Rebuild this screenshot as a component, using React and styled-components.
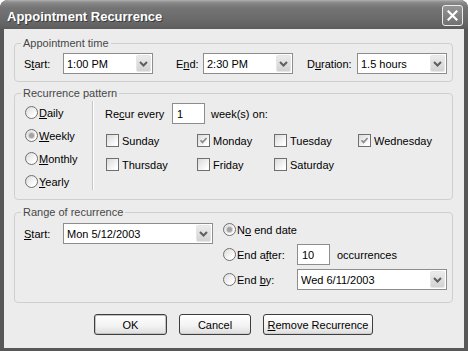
import React from "react";
import styled, { createGlobalStyle } from "styled-components";

const GlobalStyle = createGlobalStyle`
  html, body {
    margin: 0;
    padding: 0;
    background: #fff;
  }
  body {
    font-family: "Liberation Sans", Arial, sans-serif;
    font-size: 11px;
    color: #000;
  }
`;

const Window = styled.div`
  width: 468px;
  height: 351px;
  box-sizing: border-box;
  display: flex;
  flex-direction: column;
  background: #575757;
  border-radius: 8px 8px 0 0;
  overflow: hidden;
`;

const TitleBar = styled.div`
  height: 29px;
  flex-shrink: 0;
  display: flex;
  align-items: center;
  justify-content: space-between;
  padding: 1px 5px 0 7px;
  box-sizing: border-box;
  background: linear-gradient(
    to bottom,
    #b8b8b8 0px,
    #9c9c9c 1px,
    #878787 3px,
    #747474 8px,
    #6b6b6b 18px,
    #626262 26px,
    #5b5b5b 29px
  );
`;

const Title = styled.div`
  color: #fff;
  font-size: 13px;
  font-weight: bold;
  text-shadow: 1px 1px 0 #3a3a3a;
  margin-top: 2px;
`;

const CloseButton = styled.div`
  width: 21px;
  height: 21px;
  box-sizing: border-box;
  border: 1px solid #ececec;
  border-radius: 3px;
  background: linear-gradient(to bottom, #959595, #717171);
  display: flex;
  align-items: center;
  justify-content: center;
`;

const Body = styled.div`
  flex: 1;
  margin: 0 4px 3px 4px;
  background: #ececec;
  padding: 8px 11px 0 10px;
  display: flex;
  flex-direction: column;
`;

const GroupBox = styled.fieldset`
  margin: ${(p) => p.$gap || 0}px 0 0 0;
  padding: 0;
  min-width: 0;
  border: 1px solid #cfcfcf;
  border-radius: 4px;
`;

const Legend = styled.legend`
  margin-left: 6px;
  padding: 0 2px;
  line-height: 13px;
  color: #474747;
`;

const Key = styled.u`
  text-decoration: underline;
`;

const TimeRow = styled.div`
  display: flex;
  align-items: center;
  padding: 3px 0 7px 9px;
`;

const FieldLabel = styled.span`
  width: ${(p) => p.$w}px;
  margin-left: ${(p) => p.$ml || 0}px;
  flex-shrink: 0;
  white-space: nowrap;
`;

const ComboBox = styled.div`
  width: ${(p) => p.$w}px;
  height: 21px;
  box-sizing: border-box;
  border: 1px solid #8d8d8d;
  background: #fff;
  display: flex;
  align-items: center;
  padding-left: 3px;
  flex-shrink: 0;
`;

const ComboValue = styled.span`
  flex: 1;
  white-space: nowrap;
`;

const ArrowButton = styled.span`
  width: 15px;
  height: 17px;
  margin: 1px;
  box-sizing: border-box;
  border: 1px solid #e6e6e6;
  border-radius: 2px;
  background: linear-gradient(to bottom, #ebebeb, #d3d3d3);
  display: flex;
  align-items: center;
  justify-content: center;
`;

const TextBox = styled.div`
  width: ${(p) => p.$w}px;
  height: 21px;
  box-sizing: border-box;
  border: 1px solid #8d8d8d;
  background: #fff;
  display: flex;
  align-items: center;
  padding-left: 4px;
  flex-shrink: 0;
`;

const PatternBody = styled.div`
  display: flex;
  padding: 1px 0 6px 0;
`;

const RadioColumn = styled.div`
  width: 77px;
  box-sizing: border-box;
  padding-left: 10px;
  display: flex;
  flex-direction: column;
`;

const RadioRow = styled.label`
  height: ${(p) => p.$h || 23}px;
  display: flex;
  align-items: center;
  gap: 1px;
  white-space: nowrap;
`;

const RadioCircle = styled.span`
  width: 13px;
  height: 13px;
  box-sizing: border-box;
  border-radius: 50%;
  border: 1px solid #6f6f6f;
  background: linear-gradient(135deg, #dcdcdc, #ffffff 80%);
  display: flex;
  align-items: center;
  justify-content: center;
  flex-shrink: 0;

  &::after {
    content: "";
    display: ${(p) => (p.$on ? "block" : "none")};
    width: 5px;
    height: 5px;
    border-radius: 50%;
    background: #a3a3a3;
    box-shadow: 0 0 0 1px #d2d2d2;
  }
`;

const Divider = styled.div`
  border-left: 1px solid #c4c4c4;
  border-right: 1px solid #ffffff;
  margin-bottom: 3px;
`;

const RightPanel = styled.div`
  padding: 2px 0 0 11px;
  display: flex;
  flex-direction: column;
`;

const RecurRow = styled.div`
  display: flex;
  align-items: center;
`;

const Trailing = styled.span`
  margin-left: ${(p) => p.$ml}px;
  white-space: nowrap;
`;

const DayGrid = styled.div`
  display: grid;
  grid-template-columns: 91px 77px 84px auto;
  row-gap: 11px;
  margin-top: 10px;
  padding-left: 1px;
`;

const DayCheck = styled.label`
  display: flex;
  align-items: center;
  gap: 3px;
  height: 13px;
  white-space: nowrap;
`;

const CheckBox = styled.span`
  width: 13px;
  height: 13px;
  box-sizing: border-box;
  border: 1px solid #6f6f6f;
  background: linear-gradient(135deg, #dadada, #ffffff 85%);
  display: flex;
  align-items: center;
  justify-content: center;
  flex-shrink: 0;
`;

const RangeBody = styled.div`
  display: flex;
  align-items: flex-start;
  padding: 0 0 12px 9px;
`;

const StartRow = styled.div`
  display: flex;
  align-items: center;
  margin-top: 4px;
`;

const EndOptions = styled.div`
  margin-left: 10px;
  display: grid;
  grid-template-columns: 74px auto;
  grid-auto-rows: 21px;
  row-gap: 4px;
  align-items: center;
`;

const InlineField = styled.div`
  display: flex;
  align-items: center;
`;

const ButtonRow = styled.div`
  display: flex;
  justify-content: center;
  gap: 12px;
  margin-top: 11px;
`;

const Button = styled.button`
  width: ${(p) => p.$w}px;
  height: 21px;
  box-sizing: border-box;
  padding: 0;
  font: inherit;
  color: #000;
  border: 1px solid #3e3e3e;
  border-radius: 3px;
  background: linear-gradient(to bottom, #ffffff, #f3f3f3 55%, #dedede);
  box-shadow: ${(p) =>
    p.$default ? "inset 0 0 0 1px #c2c2c2" : "inset 0 -1px 0 #d0d0d0"};
`;

const Chevron = () => (
  <svg width="9" height="6" viewBox="0 0 9 6">
    <path d="M1 1 L4.5 4.5 L8 1" fill="none" stroke="#5f5f5f" strokeWidth="2" />
  </svg>
);

const Combo = ({ w, value }) => (
  <ComboBox $w={w}>
    <ComboValue>{value}</ComboValue>
    <ArrowButton>
      <Chevron />
    </ArrowButton>
  </ComboBox>
);

const Radio = ({ on, children, h }) => (
  <RadioRow $h={h}>
    <RadioCircle $on={on} />
    <span>{children}</span>
  </RadioRow>
);

const Check = ({ on, children }) => (
  <DayCheck>
    <CheckBox>
      {on && (
        <svg width="9" height="9" viewBox="0 0 9 9">
          <path
            d="M1.5 4.2 L3.5 6.4 L7.6 2"
            fill="none"
            stroke="#8c8c8c"
            strokeWidth="1.7"
          />
        </svg>
      )}
    </CheckBox>
    <span>{children}</span>
  </DayCheck>
);

export default function App() {
  return (
    <>
      <GlobalStyle />
      <Window>
        <TitleBar>
          <Title>Appointment Recurrence</Title>
          <CloseButton>
            <svg width="11" height="11" viewBox="0 0 11 11">
              <path
                d="M1.5 1.5 L9.5 9.5 M9.5 1.5 L1.5 9.5"
                stroke="#fff"
                strokeWidth="2.2"
                strokeLinecap="square"
              />
            </svg>
          </CloseButton>
        </TitleBar>
        <Body>
          <GroupBox>
            <Legend>Appointment time</Legend>
            <TimeRow>
              <FieldLabel $w={39}>
                S<Key>t</Key>art:
              </FieldLabel>
              <Combo w={90} value="1:00 PM" />
              <FieldLabel $w={27} $ml={23}>
                E<Key>n</Key>d:
              </FieldLabel>
              <Combo w={90} value="2:30 PM" />
              <FieldLabel $w={50} $ml={14}>
                D<Key>u</Key>ration:
              </FieldLabel>
              <Combo w={90} value="1.5 hours" />
            </TimeRow>
          </GroupBox>

          <GroupBox $gap={5}>
            <Legend>Recurrence pattern</Legend>
            <PatternBody>
              <RadioColumn>
                <Radio>
                  <Key>D</Key>aily
                </Radio>
                <Radio on>
                  <Key>W</Key>eekly
                </Radio>
                <Radio>
                  <Key>M</Key>onthly
                </Radio>
                <Radio>
                  <Key>Y</Key>early
                </Radio>
              </RadioColumn>
              <Divider />
              <RightPanel>
                <RecurRow>
                  <FieldLabel $w={67}>
                    Re<Key>c</Key>ur every
                  </FieldLabel>
                  <TextBox $w={33}>1</TextBox>
                  <Trailing $ml={6}>week(s) on:</Trailing>
                </RecurRow>
                <DayGrid>
                  <Check>Sunday</Check>
                  <Check on>Monday</Check>
                  <Check>Tuesday</Check>
                  <Check on>Wednesday</Check>
                  <Check>Thursday</Check>
                  <Check>Friday</Check>
                  <Check>Saturday</Check>
                </DayGrid>
              </RightPanel>
            </PatternBody>
          </GroupBox>

          <GroupBox $gap={6}>
            <Legend>Range of recurrence</Legend>
            <RangeBody>
              <StartRow>
                <FieldLabel $w={39}>
                  <Key>S</Key>tart:
                </FieldLabel>
                <Combo w={150} value="Mon 5/12/2003" />
              </StartRow>
              <EndOptions>
                <Radio on h={21}>
                  N<Key>o</Key> end date
                </Radio>
                <span />
                <Radio h={21}>
                  End a<Key>f</Key>ter:
                </Radio>
                <InlineField>
                  <TextBox $w={33}>10</TextBox>
                  <Trailing $ml={7}>occurrences</Trailing>
                </InlineField>
                <Radio h={21}>
                  End <Key>b</Key>y:
                </Radio>
                <Combo w={150} value="Wed 6/11/2003" />
              </EndOptions>
            </RangeBody>
          </GroupBox>

          <ButtonRow>
            <Button $w={73} $default>
              OK
            </Button>
            <Button $w={72}>Cancel</Button>
            <Button $w={110}>
              <Key>R</Key>emove Recurrence
            </Button>
          </ButtonRow>
        </Body>
      </Window>
    </>
  );
}
